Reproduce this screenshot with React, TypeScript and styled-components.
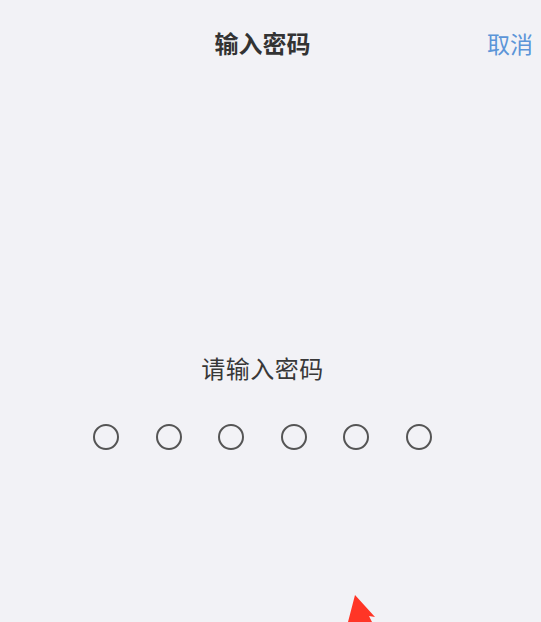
import styled, { createGlobalStyle } from "styled-components";

const GlobalStyle = createGlobalStyle`
  html, body {
    margin: 0;
    padding: 0;
    background: #f2f2f6;
  }
  body {
    font-family: "Noto Sans CJK SC", "Noto Sans", sans-serif;
  }
`;

const Page = styled.div`
  position: relative;
  width: 541px;
  height: 622px;
  overflow: hidden;
  background: #f2f2f6;
  display: flex;
  flex-direction: column;
`;

const Header = styled.div`
  height: 86px;
  display: grid;
  grid-template-columns: 1fr;
  align-items: center;
`;

const Title = styled.div`
  grid-area: 1 / 1;
  justify-self: center;
  margin-right: 16px;
  font-size: 24px;
  font-weight: 700;
  color: #333;
  line-height: 30px;
`;

const Cancel = styled.button`
  grid-area: 1 / 1;
  justify-self: end;
  margin-right: 8px;
  border: none;
  background: none;
  padding: 0;
  font-family: inherit;
  font-size: 23px;
  color: #5b95d8;
  line-height: 30px;
  cursor: pointer;
`;

const Body = styled.div`
  display: flex;
  flex-direction: column;
  align-items: center;
  padding-right: 16px;
`;

const Prompt = styled.div`
  margin-top: 267px;
  font-size: 24px;
  line-height: 30px;
  color: #383838;
  letter-spacing: 0.5px;
`;

const Dots = styled.div`
  margin-top: 41px;
  display: flex;
  gap: 36.5px;
`;

const Dot = styled.span<{ filled?: boolean }>`
  width: 26px;
  height: 26px;
  box-sizing: border-box;
  border-radius: 50%;
  border: 2px solid #555;
  background: ${(p) => (p.filled ? "#555" : "transparent")};
`;

const Pointer = styled.svg`
  position: absolute;
  left: 340px;
  top: 590px;
`;

export default function App() {
  const entered = 0;
  return (
    <>
      <GlobalStyle />
      <Page>
        <Header>
          <Title>输入密码</Title>
          <Cancel>取消</Cancel>
        </Header>
        <Body>
          <Prompt>请输入密码</Prompt>
          <Dots>
            {[0, 1, 2, 3, 4, 5].map((i) => (
              <Dot key={i} filled={i < entered} />
            ))}
          </Dots>
        </Body>
        <Pointer width="45" height="32" viewBox="0 0 45 32">
          <polygon
            points="15,5 35,27 29,26 32,32 8,32"
            fill="#ff3526"
          />
        </Pointer>
      </Page>
    </>
  );
}
